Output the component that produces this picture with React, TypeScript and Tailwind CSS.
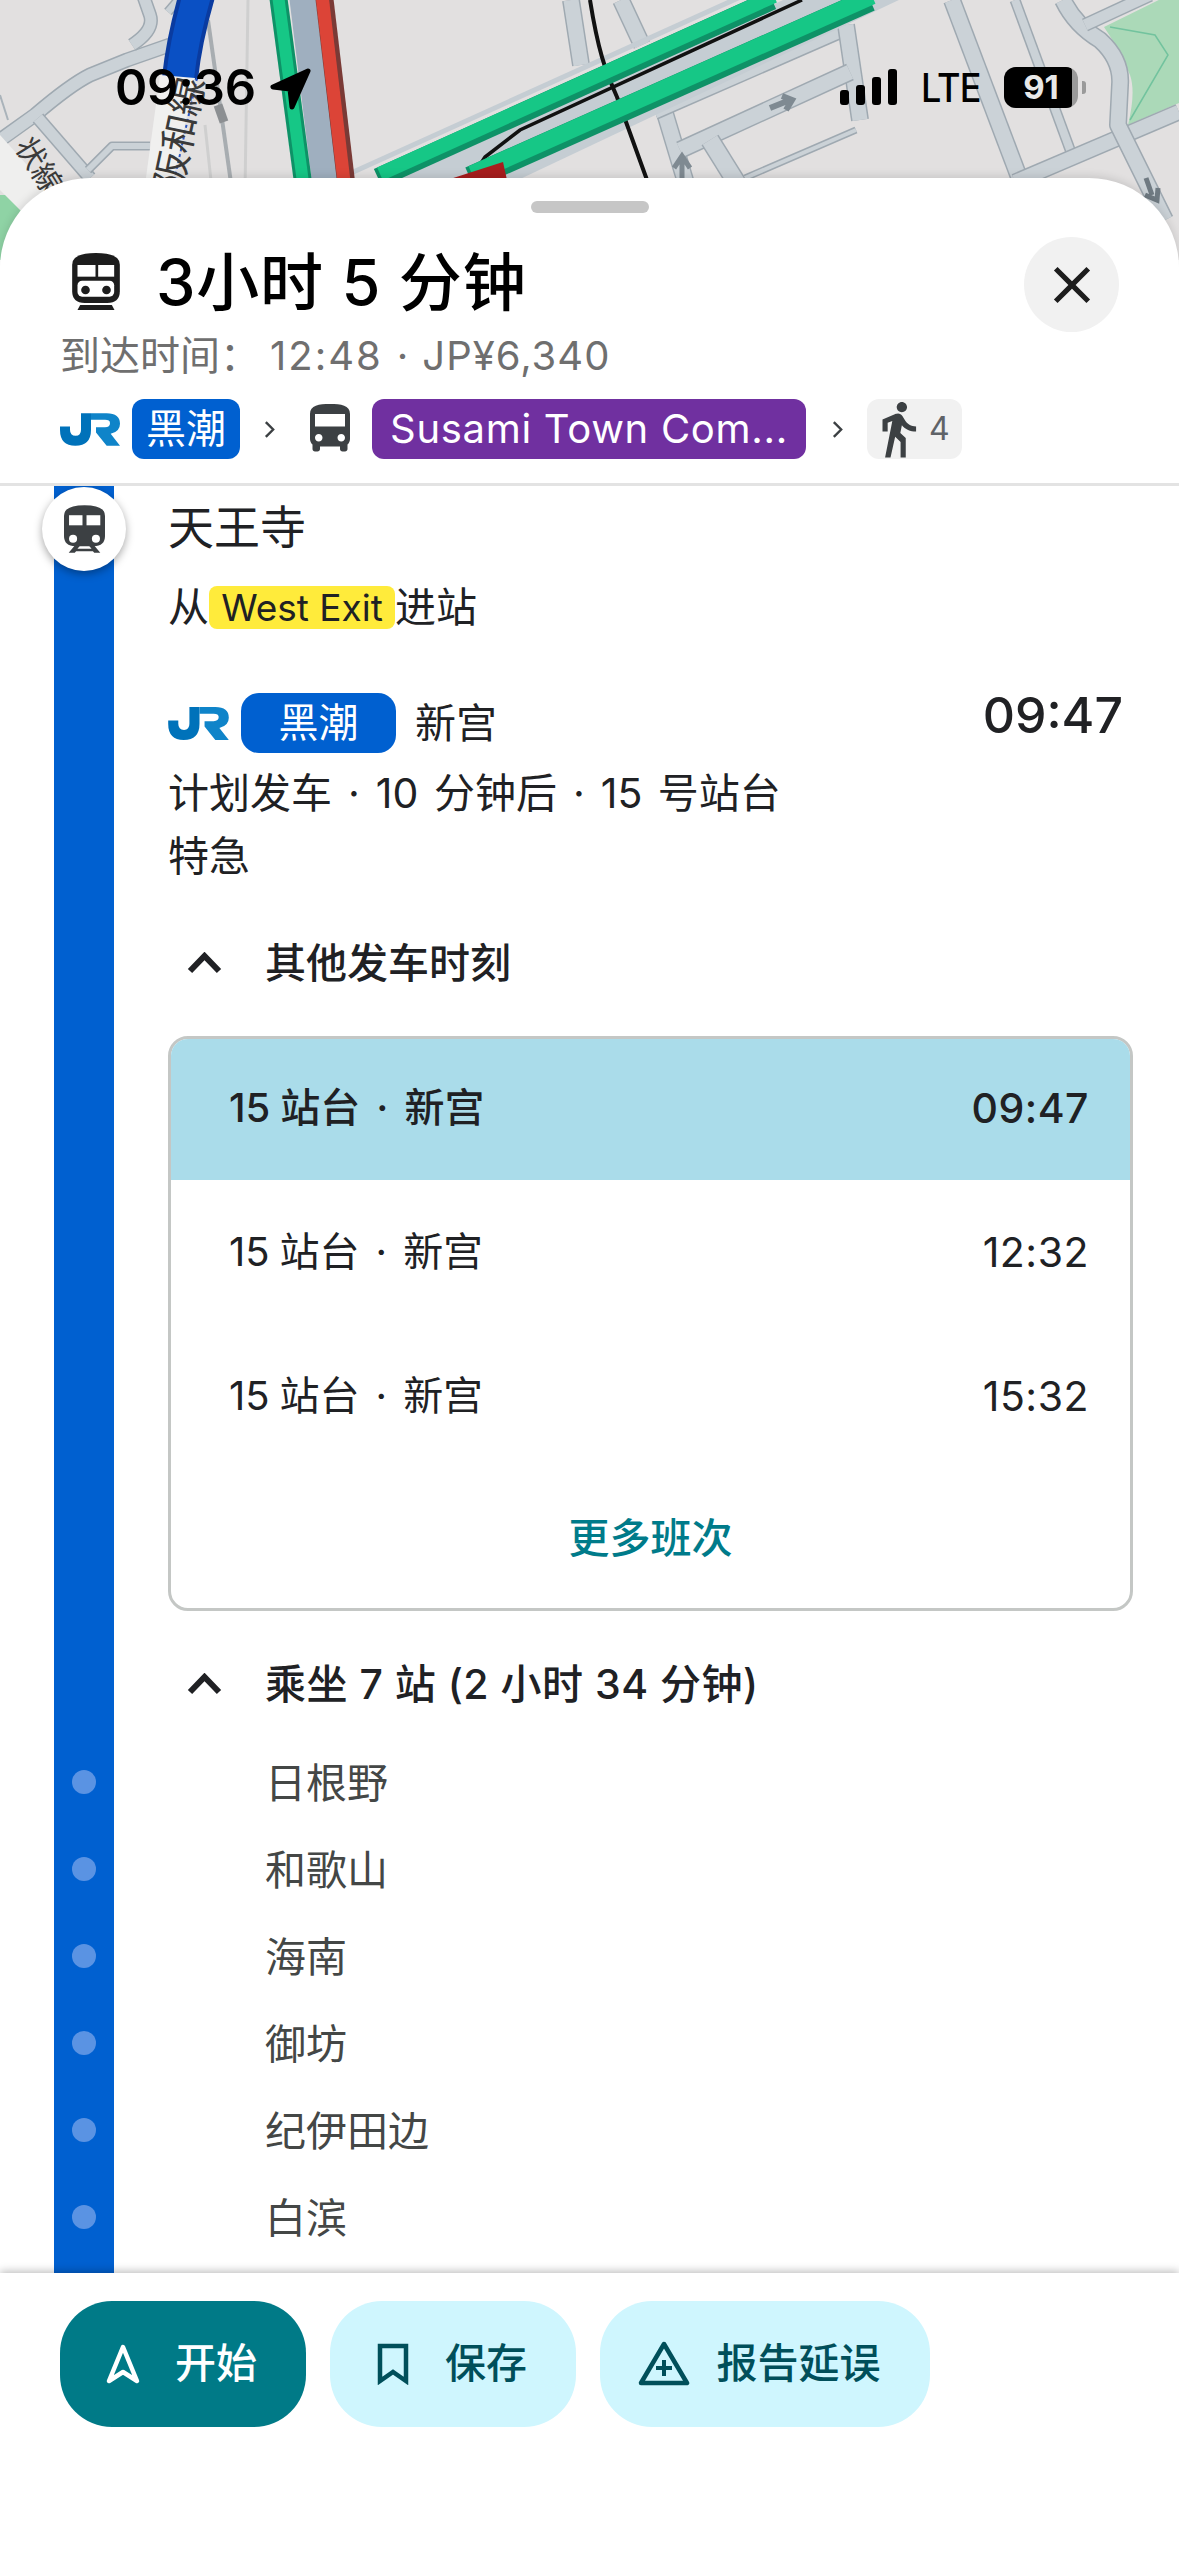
import React from "react";
import { MdDirectionsBus, MdDirectionsWalk, MdClose } from "react-icons/md";

function JR({ className }: { className: string }) {
  return (
    <svg viewBox="0 0 180 98" className={className}>
      <path fill="#0072ba" d="M0 40H30V50Q30 68 47 68Q63 68 63 50V0H93V50Q93 98 46 98Q0 98 0 50Z" />
      <path fill="#0f84c9" d="M93 0H140Q180 0 180 32Q180 56 152 62L180 98H140L108 58V42H135Q150 42 150 30Q150 20 135 20H93Z" />
    </svg>
  );
}

function TitleTrain() {
  return (
    <svg viewBox="0 0 143 171" className="w-[48px] h-[57px] shrink-0">
      <path fill="#1d1d1d" d="M0 35Q0 0 71 0Q143 0 143 35V115Q143 150 105 150H38Q0 150 0 115Z" />
      <rect x="16" y="36" width="54" height="35" fill="#fff" />
      <rect x="78" y="36" width="48" height="35" fill="#fff" />
      <rect x="16" y="83" width="110" height="48" rx="14" fill="#fff" />
      <circle cx="40" cy="111" r="13" fill="#1d1d1d" />
      <circle cx="103" cy="111" r="13" fill="#1d1d1d" />
      <path fill="#1d1d1d" d="M16 171L24 156H119L127 171Z" />
    </svg>
  );
}

function RouteTrain() {
  return (
    <svg viewBox="0 0 122 142" className="w-[41px] h-[48px]">
      <path fill="#3c4043" d="M0 32Q0 0 61 0Q122 0 122 32V92Q122 122 88 122H34Q0 122 0 92Z" />
      <rect x="15" y="30" width="40" height="30" fill="#fff" />
      <rect x="67" y="30" width="41" height="30" fill="#fff" />
      <circle cx="27" cy="100" r="12" fill="#fff" />
      <circle cx="95" cy="100" r="12" fill="#fff" />
      <path fill="#3c4043" d="M14 142L34 118H50L40 130H82L72 118H88L108 142H90L86 137H36L32 142Z" />
    </svg>
  );
}

function ChevronUp() {
  return (
    <svg viewBox="0 0 35 22" className="w-[35px] h-[22px] ml-[19px] mr-[43px] shrink-0">
      <path d="M3 19L17.5 4L32 19" fill="none" stroke="#202124" strokeWidth="6" />
    </svg>
  );
}

function Arrow() {
  return (
    <svg viewBox="0 0 12 20" className="w-[11px] h-[19px] shrink-0">
      <path d="M2 2L10 10L2 18" fill="none" stroke="#3c4043" strokeWidth="2.6" />
    </svg>
  );
}

function Road({ d, w = 16 }: { d: string; w?: number }) {
  return (
    <g fill="none" strokeLinejoin="round">
      <path d={d} stroke="#9fa9b1" strokeWidth={w} />
      <path d={d} stroke="#cbd2d7" strokeWidth={w - 3} />
    </g>
  );
}

function MapView() {
  return (
    <svg viewBox="0 0 1179 260" className="w-[1179px] h-[260px] block" fill="none">
      <rect width="1179" height="260" fill="#e2e0e0" />
      <path d="M1104 27L1179 -10V103L1128 125Q1136 92 1130 75Q1120 50 1104 27Z" fill="#abd9b8" />
      <path d="M1110 27L1155 35L1168 55L1130 120" stroke="#72c39e" strokeWidth="1.5" />
      <path d="M0 195L45 195L0 262Z" fill="#8fd3a5" />

      <Road d="M0 140L35 115Q70 85 90 75L127 60L170 45" w={15} />
      <Road d="M132 45Q155 30 150 15L143 -5" w={14} />
      <Road d="M168 12L180 -2" w={10} />
      <Road d="M38 118L90 178" w={14} />
      <Road d="M88 170L112 146H150" w={9} />
      <path d="M0 95L8 120" stroke="#aab3ba" strokeWidth="2" />

      <path d="M208 20L232 190" stroke="#a8adb1" strokeWidth="4" />
      <path d="M218 105L224 122" stroke="#8c8f92" strokeWidth="9" />
      <path d="M248 0L245 190" stroke="#cfcfcf" strokeWidth="3" />
      <path d="M205 125L212 190" stroke="#cfcfcf" strokeWidth="3" />

      <Road d="M571 0L581 65" w={18} />
      <Road d="M621 0L642 45" w={18} />
      <Road d="M664 110L688 190" w={18} />
      <Road d="M655 113L845 30" w={14} />
      <Road d="M846 25L860 120" w={18} />
      <Road d="M680 150L850 72" w={18} />
      <Road d="M710 140L738 185" w={20} />
      <Road d="M745 178L856 130" w={7} />
      <Road d="M952 0L1022 185" w={18} />
      <Road d="M1015 0L1072 155" w={11} />
      <Road d="M1015 182L1179 112" w={17} />
      <Road d="M1063 0Q1075 25 1100 40Q1122 60 1120 85L1118 125L1165 220" w={18} />
      <Road d="M1085 25L1150 -5" w={14} />

      <path d="M805 -10L350 198L480 198L920 -10Z" fill="#c5cdd3" />
      <path d="M800 -22L340 186" stroke="#c5cdd3" strokeWidth="5" transform="translate(0 -8)" />
      <path d="M590 0C598 50 605 70 617 97L647 180" stroke="#111" strokeWidth="4" />
      <path d="M802 0L520 130L485 157L470 180" stroke="#111" strokeWidth="3.5" />
      <path d="M772 0L378 178" stroke="#0e9267" strokeWidth="20" />
      <path d="M774 -4L380 174" stroke="#16c786" strokeWidth="14" />
      <path d="M870 0L470 178" stroke="#0e9267" strokeWidth="23" />
      <path d="M872 -4L472 174" stroke="#16c786" strokeWidth="17" />
      <path d="M447 180L503 162L507 180Z" fill="#a71d1d" />

      <path d="M302 -5L326 190" stroke="#9fafbf" strokeWidth="26" />
      <path d="M278 -5L304 190" stroke="#0e9267" strokeWidth="18" />
      <path d="M278 -5L304 190" stroke="#16c786" strokeWidth="12" />
      <path d="M324 -5L347 190" stroke="#7a3a36" strokeWidth="18" />
      <path d="M322 -5L345 190" stroke="#dc4437" strokeWidth="13" />

      <path d="M197 -5Q184 40 180 78" stroke="#0a3ba0" strokeWidth="36" />
      <path d="M197 -5Q184 40 180 78" stroke="#0a50c4" strokeWidth="28" />
      <path d="M197 78L172 190" stroke="#2a55c0" strokeWidth="2" strokeDasharray="3 3" />
      <path d="M160 75L195 78L172 185L145 185Z" fill="#f0f0ef" />
      <text x="0" y="0" transform="translate(181 192) rotate(-78)" fontSize="38" fill="#3a3a3a" fontFamily="'Noto Sans CJK JP',sans-serif">阪和線</text>
      <path d="M0 135L45 185L50 200L25 215L0 190Z" fill="#efefee" />
      <text x="0" y="0" transform="translate(14 146) rotate(58)" fontSize="30" fill="#3a3a3a" fontFamily="'Noto Sans CJK JP',sans-serif">状線</text>

      <path d="M770 108L790 100M782 96L792 100L786 110" stroke="#7f8a92" strokeWidth="6" />
      <path d="M682 180V158M674 168L682 156L690 168" stroke="#7f8a92" strokeWidth="5" />
      <path d="M1146 178L1152 195M1145 195L1157 200L1158 188" stroke="#6f7a82" strokeWidth="5" />
    </svg>
  );
}

function StatusBar() {
  return (
    <div className="absolute top-0 left-0 w-[1179px] h-[170px] text-black">
      <div className="absolute left-[115px] top-[62px] text-[49px] leading-[52px] font-semibold tracking-[-0.2px]">09:36</div>
      <svg viewBox="0 0 46 46" className="absolute left-[267px] top-[66px] w-[46px] h-[46px]">
        <path fill="#000" stroke="#000" strokeWidth="5" strokeLinejoin="round" d="M41 5L6 21L23 23L25 41Z" />
      </svg>
      <div className="absolute left-[840px] top-[69px] flex items-end gap-[7px] h-[36px]">
        <div className="w-[9px] h-[15px] bg-black rounded-[3px]" />
        <div className="w-[9px] h-[20px] bg-black rounded-[3px]" />
        <div className="w-[9px] h-[28px] bg-black rounded-[3px]" />
        <div className="w-[9px] h-[36px] bg-black rounded-[3px]" />
      </div>
      <div className="absolute left-[921px] top-[66px] text-[40px] leading-[44px] font-medium tracking-[-1px] scale-x-90 origin-left">LTE</div>
      <div className="absolute left-[1004px] top-[67px] w-[74px] h-[41px] rounded-[12px] overflow-hidden bg-[#9a9a9a]">
        <div className="w-[68px] h-[41px] bg-black text-[#e8e8e8] text-[33px] leading-[41px] font-bold flex items-center justify-center rounded-r-[4px] pl-[6px]">91</div>
      </div>
      <div className="absolute left-[1082px] top-[81px] w-[4px] h-[13px] rounded-r-[3px] bg-[#9a9a9a]" />
    </div>
  );
}

function Dot() {
  return <span className="mx-[16px]">·</span>;
}

function DepartureRow({ time, active }: { time: string; active?: boolean }) {
  return (
    <div className={`flex items-center justify-between pl-[58px] pr-[41px] text-[40px] ${active ? "h-[141px] pb-[3px] bg-[#aadcea] font-medium" : "h-[144px]"}`}>
      <span>
        15<span className="ml-[10px]">站台</span>
        <span className="mx-[16px]">·</span>新宫
      </span>
      <span className="text-[41px] tracking-[0.5px]">{time}</span>
    </div>
  );
}

function ActionButton({ icon, label, primary, width, gap }: { icon: React.ReactNode; label: string; primary?: boolean; width: string; gap: string }) {
  return (
    <div className={`h-[126px] rounded-[52px] flex items-center justify-center text-[41px] font-medium ${gap} ${width} ${primary ? "bg-[#007a87] text-white" : "bg-[#cff6fe] text-[#004f5a]"}`}>
      {icon}
      <span>{label}</span>
    </div>
  );
}

export default function App() {
  const stations = ["日根野", "和歌山", "海南", "御坊", "纪伊田边", "白滨"];
  return (
    <div className="relative w-[1179px] h-[2556px] overflow-hidden bg-white font-['Inter','Noto_Sans_CJK_SC',sans-serif] text-[#202124]">
      <MapView />
      <StatusBar />
      <div className="relative -mt-[82px] h-[2378px] bg-white rounded-t-[90px] flex flex-col shadow-[0_-2px_8px_rgba(0,0,0,0.12)]">
        <div className="shrink-0 border-b-[3px] border-[#e3e3e3] h-[308px]">
          <div className="mx-auto mt-[23px] w-[118px] h-[12px] rounded-[6px] bg-[#c6c6c6]" />
          <div className="mt-[24px] h-[95px] pl-[72px] pr-[60px] flex items-center justify-between">
            <div className="flex items-center gap-[36px] -mt-[6px]">
              <TitleTrain />
              <div className="text-[63px] leading-[70px] font-medium text-black tracking-[0.8px]">3小时 5 分钟</div>
            </div>
            <div className="w-[95px] h-[95px] rounded-full bg-[#f1f1f1] flex items-center justify-center">
              <MdClose className="w-[62px] h-[62px] text-[#1d1d1d]" />
            </div>
          </div>
          <div className="pl-[60px] h-[48px] text-[40px] leading-[48px] text-[#6f6f6f] flex">
            <span>到达时间：</span>
            <span className="ml-[10px] tracking-[2px]">12:48</span>
            <span className="mx-[14px]">·</span>
            <span className="tracking-[1px]">JP¥6,340</span>
          </div>
          <div className="mt-[19px] pl-[60px] h-[60px] flex items-center">
            <JR className="w-[60px] h-[33px] mr-[12px] shrink-0" />
            <div className="w-[108px] h-[60px] rounded-[12px] bg-[#0060d0] text-white text-[40px] flex items-center justify-center">黑潮</div>
            <div className="ml-[24px]"><Arrow /></div>
            <MdDirectionsBus className="w-[60px] h-[60px] ml-[25px] text-[#3c4043] shrink-0" />
            <div className="ml-[12px] w-[434px] h-[60px] rounded-[12px] bg-[#7030a0] text-white text-[40px] tracking-[0.7px] flex items-center justify-center whitespace-nowrap">Susami Town Com...</div>
            <div className="ml-[26px]"><Arrow /></div>
            <div className="ml-[24px] w-[95px] h-[60px] rounded-[12px] bg-[#f1f1f1] flex items-center text-[32px] text-[#5f6368]">
              <MdDirectionsWalk className="w-[62px] h-[62px] -my-[1px] text-[#3c4043] shrink-0" />
              <span>4</span>
            </div>
          </div>
        </div>

        <div className="relative h-[1787px] shrink-0 flex overflow-hidden">
          <div className="relative w-[168px] shrink-0">
            <div className="ml-[54px] w-[60px] h-full bg-[#0060d0] flex flex-col items-center gap-[63px] pt-[1284px]">
              {stations.map((s) => (
                <div key={s} className="w-[24px] h-[24px] rounded-full bg-[#5a93e3] shrink-0" />
              ))}
            </div>
            <div className="absolute left-[42px] top-[1px] w-[84px] h-[84px] rounded-full bg-white shadow-[0_3px_8px_rgba(0,0,0,0.35)] flex items-center justify-center">
              <RouteTrain />
            </div>
          </div>

          <div className="flex-1 pr-[46px] flex flex-col text-[41px] leading-[50px]">
            <div className="mt-[16px] h-[50px] text-[46px]">天王寺</div>
            <div className="mt-[30px] h-[50px] flex items-center">
              <span>从</span>
              <span className="h-[43px] w-[186px] rounded-[8px] bg-[#ffeb3b] text-[37px] leading-[43px] flex items-center justify-center">West Exit</span>
              <span>进站</span>
            </div>
            <div className="mt-[61px] h-[60px] pr-[10px] flex items-center">
              <JR className="w-[61px] h-[33px] shrink-0" />
              <div className="ml-[12px] w-[155px] h-[60px] rounded-[18px] bg-[#0060d0] text-white text-[40px] flex items-center justify-center">黑潮</div>
              <div className="ml-[19px]">新宫</div>
              <div className="ml-auto text-[50px] font-medium -mt-[17px]">09:47</div>
            </div>
            <div className="mt-[15px] h-[50px] flex [word-spacing:4px] whitespace-pre">
              <span>计划发车</span>
              <Dot />
              <span>10 分钟后</span>
              <Dot />
              <span>15 号站台</span>
            </div>
            <div className="mt-[13px] h-[50px]">特急</div>
            <div className="mt-[57px] h-[50px] flex items-center font-medium">
              <ChevronUp />
              <span>其他发车时刻</span>
            </div>
            <div className="mt-[48px] h-[575px] shrink-0 rounded-[20px] border-[3px] border-[#c4c7c5] overflow-hidden">
              <DepartureRow time="09:47" active />
              <DepartureRow time="12:32" />
              <DepartureRow time="15:32" />
              <div className="h-[140px] flex items-center justify-center text-[#007b8a] font-medium">更多班次</div>
            </div>
            <div className="mt-[48px] h-[50px] flex items-center font-medium">
              <ChevronUp />
              <span className="tracking-[0.5px]">乘坐 7 站 (2 小时 34 分钟)</span>
            </div>
            <div className="mt-[30px] pl-[97px] text-[#444746]">
              {stations.map((s) => (
                <div key={s} className="h-[87px] flex items-center">{s}</div>
              ))}
            </div>
          </div>
        </div>

        <div className="relative flex-1 bg-white shadow-[0_-2px_8px_rgba(0,0,0,0.25)] pt-[28px] pl-[60px] flex gap-[24px] items-start">
          <ActionButton
            primary
            width="w-[246px] pr-[4px]"
            gap="gap-[34px]"
            label="开始"
            icon={
              <svg viewBox="0 0 36 42" className="w-[36px] h-[42px]">
                <path d="M18 4L32 38L18 29L4 38Z" fill="none" stroke="#fff" strokeWidth="4.5" strokeLinejoin="round" />
              </svg>
            }
          />
          <ActionButton
            width="w-[246px] pr-[2px]"
            gap="gap-[36px]"
            label="保存"
            icon={
              <svg viewBox="0 0 32 42" className="w-[32px] h-[42px]">
                <path d="M3 3H29V38L16 29L3 38Z" fill="none" stroke="#004f5a" strokeWidth="4.5" />
              </svg>
            }
          />
          <ActionButton
            width="w-[330px] pr-[12px]"
            gap="gap-[27px]"
            label="报告延误"
            icon={
              <svg viewBox="0 0 52 46" className="w-[52px] h-[46px] -mt-[3px]">
                <path d="M26 4L49 43H3Z" fill="none" stroke="#004f5a" strokeWidth="4.5" strokeLinejoin="round" />
                <path d="M26 20V36M18 28H34" stroke="#004f5a" strokeWidth="4" />
              </svg>
            }
          />
        </div>
      </div>
    </div>
  );
}
